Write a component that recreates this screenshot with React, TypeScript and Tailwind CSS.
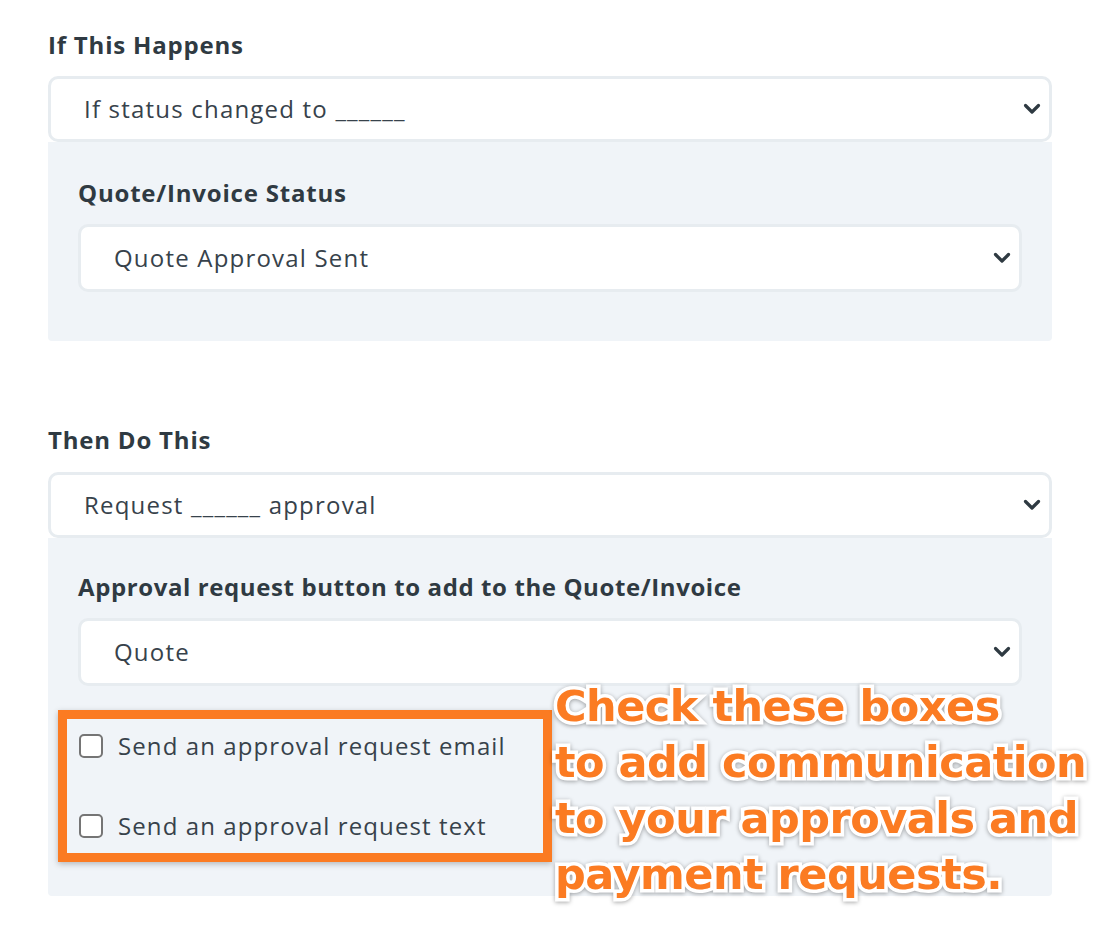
import React from 'react';

const font = { fontFamily: '"Open Sans", Lato, sans-serif' };

function Chevron() {
  return (
    <svg width="18" height="12" viewBox="0 0 18 12" className="text-[#2f3a42]">
      <path d="M2.5 2.5 L9 9 L15.5 2.5" fill="none" stroke="currentColor" strokeWidth="3.2" strokeLinecap="round" strokeLinejoin="round" />
    </svg>
  );
}

function Select({ value, inset }: { value: string; inset?: boolean }) {
  return (
    <div
      className={`flex items-center justify-between bg-white border-[3px] border-[#e7ecf0] rounded-[10px] pl-[33px] pr-[8px] ${inset ? 'h-[68px]' : 'h-[66px]'}`}
    >
      <span className="text-[24px] text-[#37424b] tracking-[1.2px]">{value}</span>
      <Chevron />
    </div>
  );
}

function Checkbox({ label }: { label: string }) {
  return (
    <label className="flex items-center gap-[15px] h-[40px]">
      <span className="w-[24px] h-[24px] rounded-[5px] border-2 border-[#757575] bg-white shrink-0" />
      <span className="text-[24px] text-[#37424b] tracking-[1.1px]">{label}</span>
    </label>
  );
}

export default function App() {
  return (
    <div className="relative w-[1104px] h-[928px] bg-white overflow-hidden" style={font}>
      <div className="pl-[48px] pr-[52px] pt-[31px]">
        {/* If this happens */}
        <h2 className="text-[24px] leading-[28px] font-bold text-[#2f3a42] tracking-[0.8px] mb-[17px]">If This Happens</h2>
        <Select value="If status changed to ______" />
        <div className="bg-[#f0f4f8] rounded-b-[4px] px-[30px] pt-[37px] pb-[49px]">
          <h3 className="text-[24px] leading-[28px] font-bold text-[#2f3a42] tracking-[0.8px] mb-[17px]">Quote/Invoice Status</h3>
          <Select value="Quote Approval Sent" inset />
        </div>

        {/* Then do this */}
        <h2 className="text-[24px] leading-[28px] font-bold text-[#2f3a42] tracking-[0.8px] mt-[85px] mb-[18px]">Then Do This</h2>
        <Select value="Request ______ approval" />
        <div className="bg-[#f0f4f8] rounded-b-[4px] px-[30px] pt-[35px] pb-[50px]">
          <h3 className="text-[24px] leading-[28px] font-bold text-[#2f3a42] tracking-[0.6px] mb-[17px]">Approval request button to add to the Quote/Invoice</h3>
          <Select value="Quote" inset />
          <div className="flex flex-col gap-[40px] pt-[40px] pl-[1px]">
            <Checkbox label="Send an approval request email" />
            <Checkbox label="Send an approval request text" />
          </div>
        </div>
      </div>

      {/* annotation box */}
      <div className="absolute left-[58px] top-[710px] w-[494px] h-[152px] border-[9px] border-[#fb7b22] shadow-[0_2px_6px_rgba(0,0,0,0.25)]" />

      {/* annotation text */}
      <div
        className="absolute left-[555px] top-[678px] whitespace-nowrap text-[43px] leading-[56px] font-black text-[#fb7b22] tracking-[-0.5px] [paint-order:stroke_fill] [-webkit-text-stroke:7px_white] [filter:drop-shadow(0_1px_2px_rgba(0,0,0,0.35))]"
        style={{ fontFamily: '"DejaVu Sans", "Liberation Sans", sans-serif' }}
      >
        <div>Check these boxes</div>
        <div>to add communication</div>
        <div>to your approvals and</div>
        <div>payment requests.</div>
      </div>
    </div>
  );
}
